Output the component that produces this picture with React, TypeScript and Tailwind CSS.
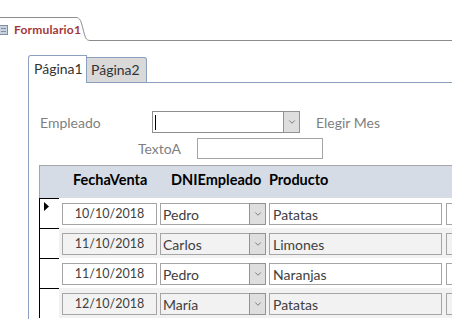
import { ChevronDown } from 'lucide-react';

const font = { fontFamily: 'Lato, "Noto Sans", sans-serif' };

interface Venta {
  fecha: string;
  empleado: string;
  producto: string;
}

const ventas: Venta[] = [
  { fecha: '10/10/2018', empleado: 'Pedro', producto: 'Patatas' },
  { fecha: '11/10/2018', empleado: 'Carlos', producto: 'Limones' },
  { fecha: '11/10/2018', empleado: 'Pedro', producto: 'Naranjas' },
  { fecha: '12/10/2018', empleado: 'María', producto: 'Patatas' },
];

function ComboArrow({ className = '' }: { className?: string }) {
  return (
    <div className={`shrink-0 flex items-center justify-center bg-[#dedede] border border-[#939393] ${className}`}>
      <ChevronDown className="w-[10px] h-[10px] text-[#444]" strokeWidth={1.5} />
    </div>
  );
}

export default function App() {
  return (
    <div className="w-[452px] h-[319px] bg-white overflow-hidden text-[#404040]" style={font}>
      {/* document tab */}
      <div className="flex items-end h-[41px]">
        <div className="h-[24px] w-[74px] shrink-0 border-t border-[#8c8c8c] flex items-center">
          <div className="shrink-0 w-[8px] h-[10px] mt-[1px] bg-[#c9d3e0] border border-[#7d8ea6] border-l-0 flex flex-col justify-center gap-[2px] pl-[1px]">
            <div className="h-px w-[5px] bg-[#7d8ea6]" />
            <div className="h-px w-[5px] bg-[#7d8ea6]" />
          </div>
          <span className="ml-[6px] text-[12px] tracking-[0.2px] font-bold text-[#a4373a] whitespace-nowrap">Formulario1</span>
        </div>
        <svg width="16" height="24" viewBox="0 0 16 24" className="block shrink-0">
          <path d="M0 0.5 H2 C6 0.5 7 4 9 12 C11 20 12 23.5 16 23.5" fill="none" stroke="#8c8c8c" strokeWidth="1" />
        </svg>
        <div className="flex-1 h-[24px] border-b border-[#8c8c8c]" />
      </div>

      <div className="flex h-[278px]">
        <div className="ml-[2px] w-px bg-black" />
        <div className="ml-[26px] flex-1 flex flex-col">
          {/* page tabs */}
          <div className="flex items-end mt-[14px] h-[28px]">
            <div className="h-[28px] w-[59px] border-l border-t border-r border-[#8ba0bc] rounded-tl-[3px] flex items-center pl-[5px] pb-[3px] text-[14px] text-[#333]">
              Página1
            </div>
            <div className="h-[26px] w-[60px] border-t border-r border-b border-[#8ba0bc] rounded-tr-[3px] bg-[#d9d9d9] flex items-center pl-[4px] pb-px text-[14px] text-[#333]">
              Página2
            </div>
            <div className="flex-1 border-b border-[#8ba0bc]" />
          </div>

          <div className="flex-1 border-l border-[#8ba0bc] flex flex-col">
            <div className="flex items-center h-[22px] mt-[28px]">
              <div className="ml-[11px] w-[112px] text-[14px] text-[#7f7f7f]">Empleado</div>
              <div className="w-[148px] h-[22px] border border-[#8e8e8e] flex">
                <div className="flex-1 flex items-center pl-[2px]">
                  <div className="w-px h-[15px] bg-black" />
                </div>
                <ComboArrow className="w-[17px] -my-px -mr-px" />
              </div>
              <div className="ml-[16px] text-[14px] text-[#7f7f7f]">Elegir Mes</div>
            </div>

            <div className="flex items-center h-[21px] mt-[5px]">
              <div className="w-[168px] pr-[16px] text-right text-[14px] text-[#7f7f7f]">TextoA</div>
              <div className="w-[126px] h-[21px] border border-[#a5a5a5]" />
            </div>

            <div className="ml-[10px] mt-[6px] flex-1 flex flex-col">
              <div className="h-[33px] bg-[#d6dce5] border-t border-l border-[#a6a6a6] flex items-center pb-[5px] text-[14.5px] font-bold text-black whitespace-nowrap">
                <span className="ml-[33px] w-[98px]">FechaVenta</span>
                <span className="w-[98px]">DNIEmpleado</span>
                <span>Producto</span>
              </div>

              {ventas.map((v, i) => {
                const alt = i % 2 === 1;
                const bg = alt ? 'bg-[#f2f2f2]' : 'bg-white';
                return (
                  <div key={i} className="flex h-[30px]">
                    <div className="w-[20px] border-l border-t border-black bg-white flex items-start">
                      {i === 0 && (
                        <svg width="5" height="9" viewBox="0 0 5 9" className="ml-[4px] mt-[3px]">
                          <path d="M0 0 L5 4.5 L0 9 Z" fill="#000" />
                        </svg>
                      )}
                    </div>
                    <div className={`flex-1 flex items-start pt-[5px] ${bg}`}>
                      <div className={`ml-[3px] w-[95px] h-[22px] border border-[#a5a5a5] flex items-center justify-center text-[12.5px] ${bg}`}>
                        {v.fecha}
                      </div>
                      <div className={`ml-[3px] w-[106px] h-[22px] border border-[#a5a5a5] flex ${bg}`}>
                        <div className="flex-1 flex items-center pl-[2px] text-[14px]">{v.empleado}</div>
                        <ComboArrow className="w-[17px] -my-px -mr-px" />
                      </div>
                      <div className={`ml-[3px] w-[173px] h-[22px] border border-[#a5a5a5] flex items-center pl-[3px] text-[14px] ${bg}`}>
                        {v.producto}
                      </div>
                      <div className={`ml-[4px] w-[40px] h-[22px] border border-[#a5a5a5] ${bg}`} />
                    </div>
                  </div>
                );
              })}
            </div>
          </div>
        </div>
      </div>
    </div>
  );
}
